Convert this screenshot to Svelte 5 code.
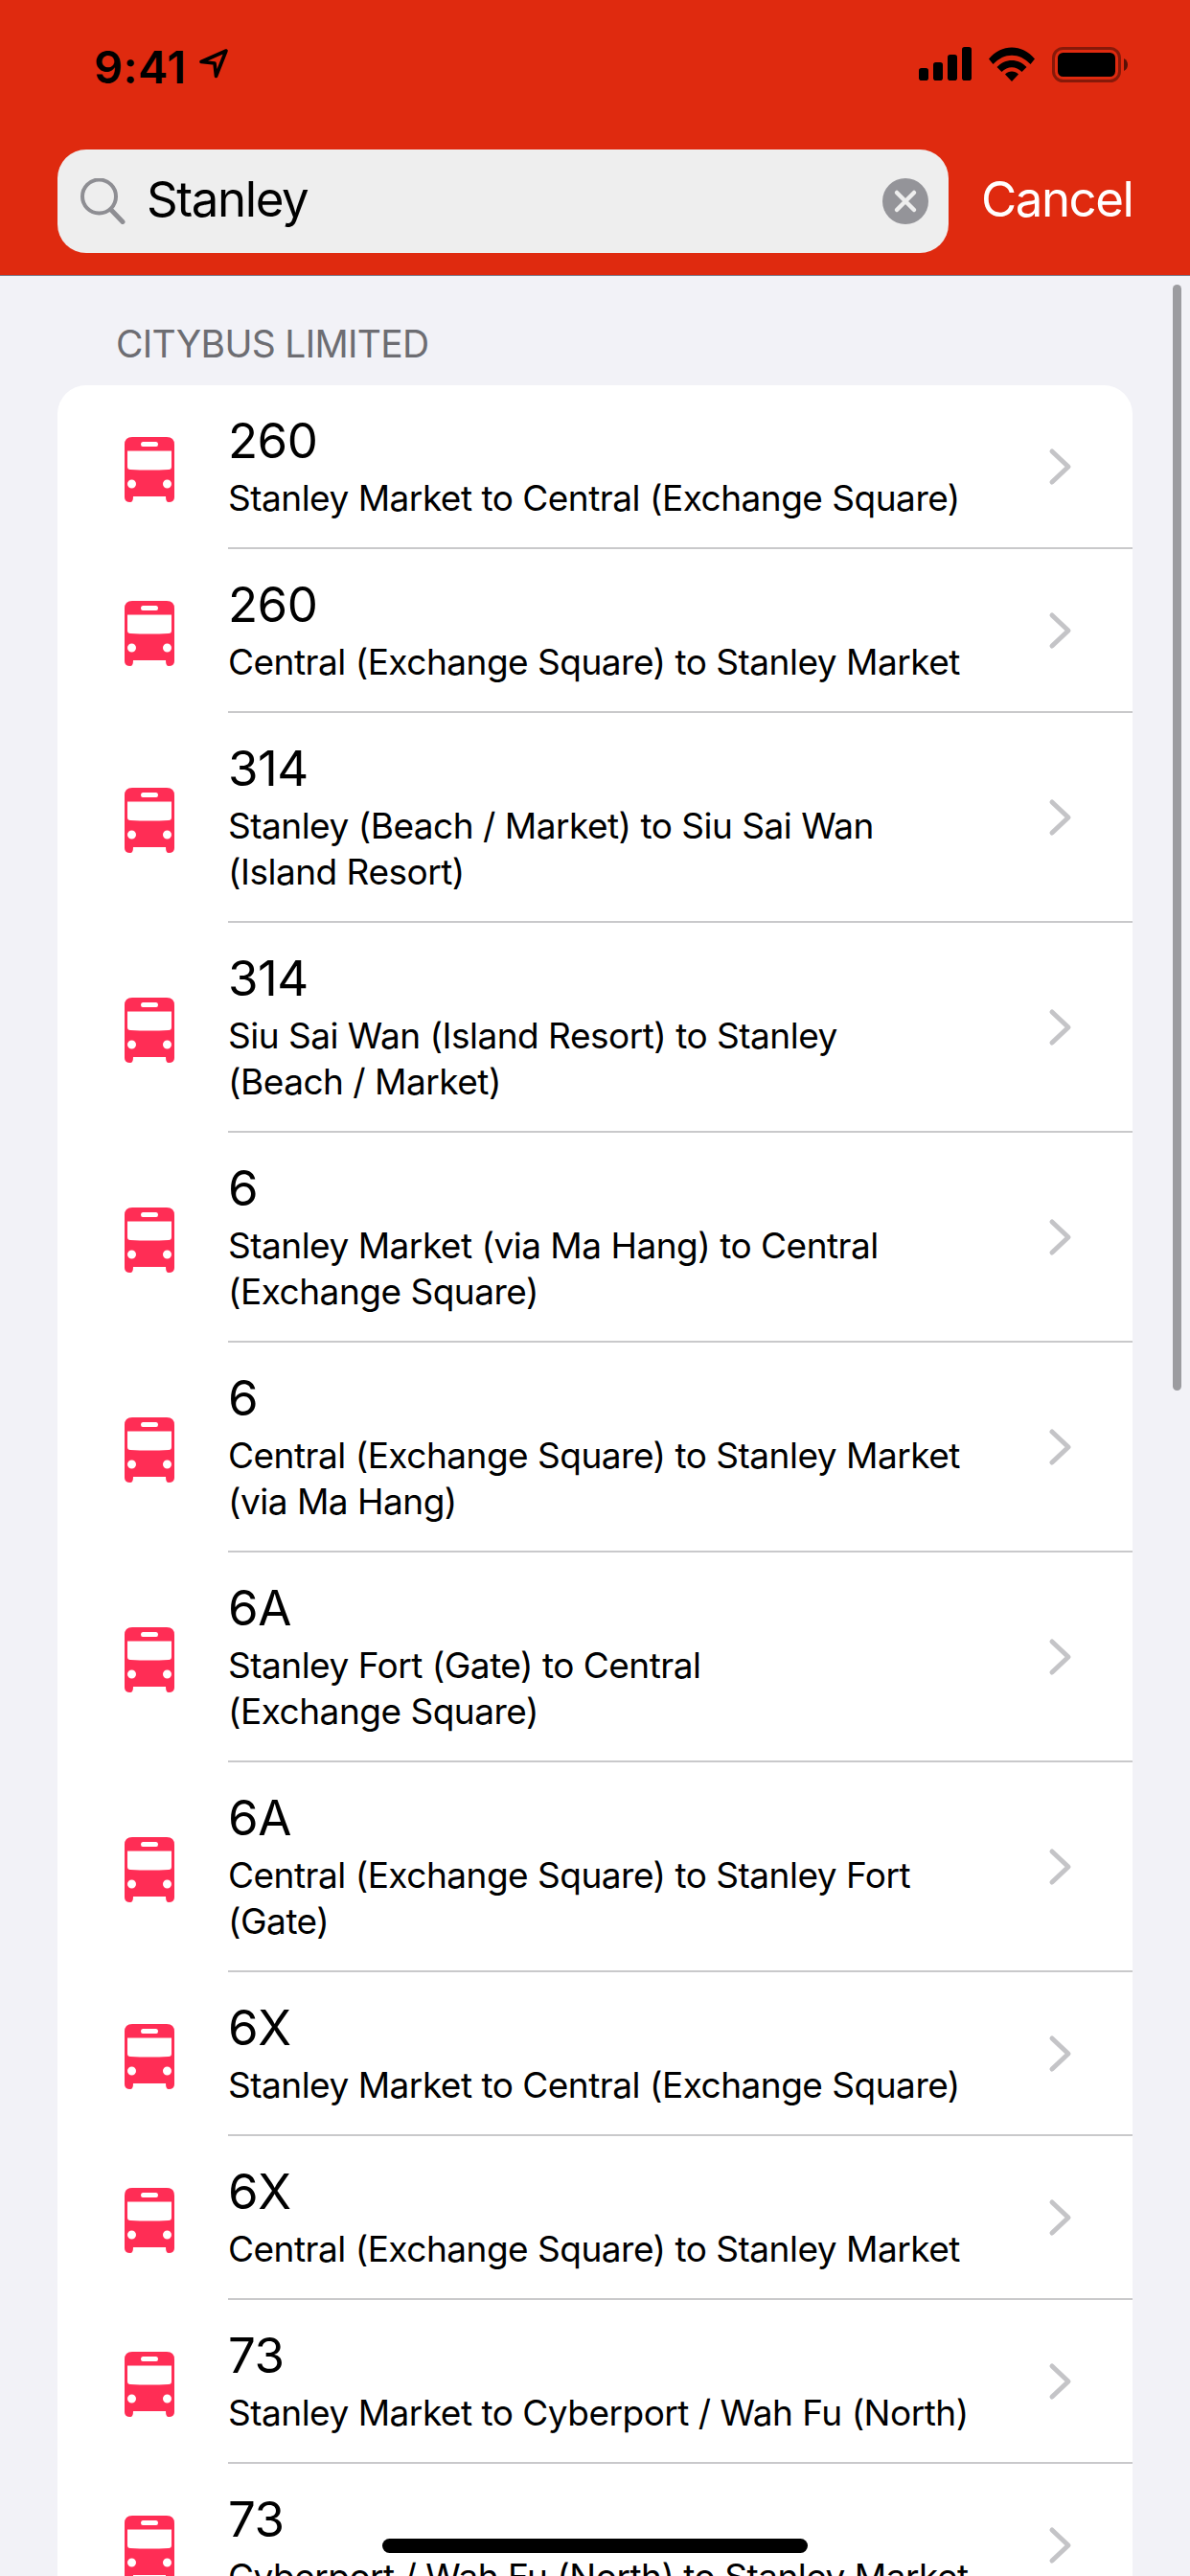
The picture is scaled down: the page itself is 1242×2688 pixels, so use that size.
<script>
  const routes = [
    ['260', ['Stanley Market to Central (Exchange Square)']],
    ['260', ['Central (Exchange Square) to Stanley Market']],
    ['314', ['Stanley (Beach / Market) to Siu Sai Wan', '(Island Resort)']],
    ['314', ['Siu Sai Wan (Island Resort) to Stanley', '(Beach / Market)']],
    ['6', ['Stanley Market (via Ma Hang) to Central', '(Exchange Square)']],
    ['6', ['Central (Exchange Square) to Stanley Market', '(via Ma Hang)']],
    ['6A', ['Stanley Fort (Gate) to Central', '(Exchange Square)']],
    ['6A', ['Central (Exchange Square) to Stanley Fort', '(Gate)']],
    ['6X', ['Stanley Market to Central (Exchange Square)']],
    ['6X', ['Central (Exchange Square) to Stanley Market']],
    ['73', ['Stanley Market to Cyberport / Wah Fu (North)']],
    ['73', ['Cyberport / Wah Fu (North) to Stanley Market']]
  ];
</script>

<div class="screen">
  <header class="header">
    <div class="status">
      <div class="clock">
        <span class="time">9:41</span>
        <svg class="arrow" width="32" height="32" viewBox="0 0 32 32">
          <path d="M29 3 L3 14.500 L17 16 L18.500 29.500 Z" fill="none" stroke="#000" stroke-width="3.600" stroke-linejoin="round" />
        </svg>
      </div>
      <div class="indicators">
        <svg width="55" height="35" viewBox="0 0 55 35">
          <rect x="0" y="22" width="10" height="13" rx="2.800" />
          <rect x="15" y="16" width="10" height="19" rx="2.800" />
          <rect x="30" y="8" width="10" height="27" rx="2.800" />
          <rect x="45" y="0" width="10" height="35" rx="2.800" />
        </svg>
        <svg width="48" height="36" viewBox="0 0 48 36">
          <path d="M0 12.500 C13 -3.500 35 -3.500 48 12.500 L43.500 18 C32 5.500 16 5.500 4.500 18 Z" />
          <path d="M8.500 21 C17 11.500 31 11.500 39.500 21 L34.500 26 C28.500 19.500 19.500 19.500 13.500 26 Z" />
          <path d="M17 28.500 C20.500 24.500 27.500 24.500 31 28.500 L24 36 Z" />
        </svg>
        <svg width="79" height="37" viewBox="0 0 79 37">
          <rect x="1.500" y="1.500" width="69" height="34" rx="10" fill="none" stroke="#000" stroke-opacity="0.4" stroke-width="3" />
          <rect x="6" y="6" width="60" height="25" rx="5.500" />
          <path d="M75 12 C78 13.500 79 16 79 18.500 C79 21 78 23.500 75 25 Z" fill="#000" fill-opacity="0.6" />
        </svg>
      </div>
    </div>
    <div class="search-row">
      <div class="search">
        <svg class="glass" width="47" height="48" viewBox="0 0 47 48">
          <circle cx="19.500" cy="19" r="17.500" fill="none" stroke="#8e8e93" stroke-width="4" />
          <path d="M32 33 L44 45.500" fill="none" stroke="#8e8e93" stroke-width="5" stroke-linecap="round" />
        </svg>
        <span class="query">Stanley</span>
        <svg class="clear" width="48" height="48" viewBox="0 0 48 48">
          <circle cx="24" cy="24" r="24" fill="#949499" />
          <path d="M15 15 L33 33 M33 15 L15 33" stroke="#eee" stroke-width="4.500" stroke-linecap="round" />
        </svg>
      </div>
      <span class="cancel">Cancel</span>
    </div>
  </header>

  <main class="content">
    <h2 class="section">CITYBUS LIMITED</h2>
    <ul class="list">
      {#each routes as [num, lines]}
        <li class="row">
          <div class="icon-cell">
            <svg class="bus" width="52" height="68" viewBox="0 0 52 68">
              <path fill-rule="evenodd" fill="#ff2d55" d="M8 0 H44 Q52 0 52 8 V63 Q52 68 46 68 Q43 68 43 62 H9 Q9 68 6 68 Q0 68 0 63 V8 Q0 0 8 0 Z M19 5 Q17 5 17 7.500 Q17 10 19 10 H33 Q35 10 35 7.500 Q35 5 33 5 Z M3 14.500 V31 Q3 34 6 34 Q26 35 46 34 Q49 34 49 31 V14.500 Z M7.500 44.500 A4.500 4.500 0 1 0 7.500 53.500 A4.500 4.500 0 1 0 7.500 44.500 Z M44.500 44.500 A4.500 4.500 0 1 0 44.500 53.500 A4.500 4.500 0 1 0 44.500 44.500 Z" />
            </svg>
          </div>
          <div class="body">
            <div class="text">
              <div class="num">{num}</div>
              {#each lines as line}
                <div class="sub">{line}</div>
              {/each}
            </div>
            <svg class="chevron" width="26" height="40" viewBox="0 0 26 40">
              <path d="M4 4 L21 20 L4 36" fill="none" stroke="#c4c4c7" stroke-width="5" stroke-linecap="round" stroke-linejoin="round" />
            </svg>
          </div>
        </li>
      {/each}
    </ul>
  </main>

  <div class="scrollbar"></div>
  <div class="home"></div>
</div>

<style>
  :global(body) {
    margin: 0;
    background: #f2f2f7;
  }
  .screen {
    position: relative;
    width: 1242px;
    height: 2688px;
    overflow: hidden;
    background: #f2f2f7;
    font-family: Inter, "Liberation Sans", sans-serif;
    color: #000;
  }
  .header {
    height: 288px;
    box-sizing: border-box;
    background: #df2a0f;
    border-bottom: 1px solid #7f7f8f;
  }
  .status {
    height: 156px;
    box-sizing: border-box;
    display: flex;
    justify-content: space-between;
    padding: 49px 65px 0 98px;
  }
  .clock {
    display: flex;
    align-items: flex-start;
    gap: 12px;
  }
  .time {
    font-size: 47px;
    font-weight: 600;
    line-height: 42px;
    letter-spacing: 0.500px;
  }
  .arrow {
    margin-top: 1px;
  }
  .indicators {
    display: flex;
    align-items: flex-start;
    gap: 18px;
  }
  .search-row {
    display: flex;
    align-items: center;
    gap: 34px;
    padding-left: 60px;
  }
  .search {
    width: 930px;
    height: 108px;
    box-sizing: border-box;
    background: #eeeeee;
    border-radius: 30px;
    display: flex;
    align-items: center;
    padding: 0 21px 0 24px;
  }
  .glass {
    margin-right: 22px;
  }
  .query {
    flex: 1;
    font-size: 51px;
    letter-spacing: -1.400px;
    padding-bottom: 5px;
  }
  .cancel {
    font-size: 51px;
    color: #fff;
    letter-spacing: -1.500px;
    padding-bottom: 5px;
  }
  .content {
    padding: 0 60px;
  }
  .section {
    margin: 0;
    padding: 48px 0 0 61px;
    height: 66px;
    font-size: 39px;
    font-weight: 400;
    line-height: 46px;
    letter-spacing: -0.700px;
    color: #6d6d72;
  }
  .list {
    list-style: none;
    margin: 0;
    padding: 0;
    background: #fff;
    border-radius: 30px;
    overflow: hidden;
  }
  .row {
    display: flex;
  }
  .icon-cell {
    width: 178px;
    flex: none;
    display: flex;
    align-items: center;
    padding: 4px 0 0 70px;
    box-sizing: border-box;
  }
  .body {
    flex: 1;
    display: flex;
    align-items: center;
    justify-content: space-between;
    border-bottom: 2px solid #c9c9cb;
    padding: 0 62px 0 0;
    min-width: 0;
  }
  .text {
    padding: 28px 0 27px 0;
  }
  .num {
    font-size: 51px;
    line-height: 60px;
    padding-bottom: 6px;
    letter-spacing: -0.500px;
  }
  .sub {
    font-size: 37px;
    line-height: 48px;
    letter-spacing: -0.500px;
    white-space: nowrap;
  }
  .chevron {
    flex: none;
  }
  .scrollbar {
    position: absolute;
    left: 1224px;
    top: 297px;
    width: 9px;
    height: 1154px;
    border-radius: 5px;
    background: #9c9ca0;
  }
  .home {
    position: absolute;
    left: 399px;
    top: 2649px;
    width: 444px;
    height: 15px;
    border-radius: 8px;
    background: #000;
  }
</style>
